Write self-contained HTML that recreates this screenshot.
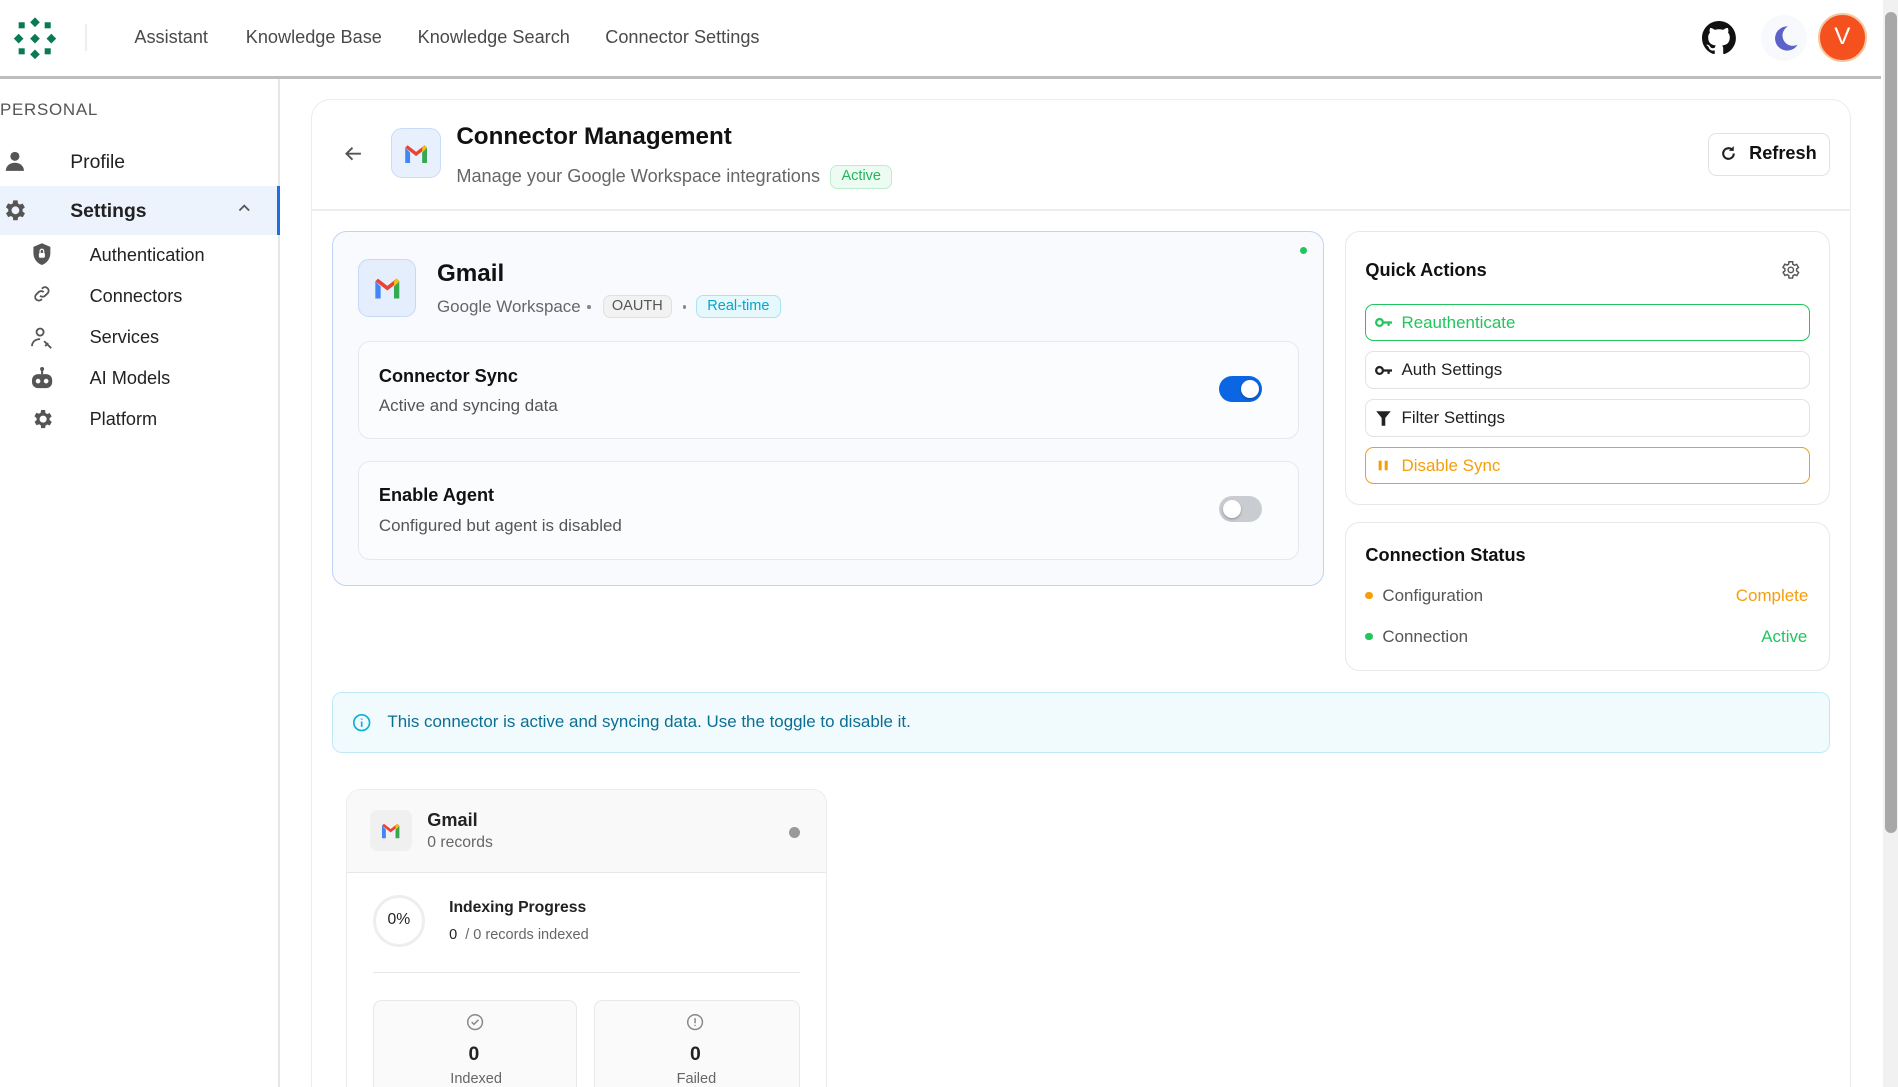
<!DOCTYPE html>
<html><head><meta charset="utf-8"><style>
*{box-sizing:border-box;margin:0;padding:0}
html,body{width:1898px;height:1087px;overflow:hidden;background:#fff}
#r{zoom:1.21046;width:1568px;height:898px;position:relative;font-family:"Liberation Sans",sans-serif;color:#1f2328}
.a{position:absolute;white-space:nowrap}
.box{position:absolute;border:1px solid #e8e8e8;border-radius:12px;background:#fff}
.tg{position:absolute;width:36px;height:21px;border-radius:11px}
.tg i{position:absolute;top:3px;width:15px;height:15px;border-radius:50%;background:#fff;box-shadow:0 1px 2px rgba(0,0,0,.3)}
.btn{position:absolute;left:1128px;width:367px;height:31px;border:1px solid #e2e2e2;border-radius:7px;font-size:14px;font-weight:bold;padding-left:29px;line-height:29px}
.btn svg{position:absolute;left:7px;top:8px}
.sb{font-size:15px;color:#222}
</style></head><body><div id="r">
<svg class="a" style="left:10px;top:12px" width="40" height="40" viewBox="10 12 40 40" fill="#0a7a55">
<rect x="15.5" y="18" width="5" height="5"/><rect x="37" y="18" width="5" height="5"/><rect x="15.5" y="39.5" width="5" height="5"/><rect x="37" y="39.5" width="5" height="5"/>
<path d="M29 14l4 4-4 4-4-4zM15.5 27.5l4 4-4 4-4-4zM29 27.5l4 4-4 4-4-4zM42.5 27.5l4 4-4 4-4-4zM29 40.5l4 4-4 4-4-4z"/></svg>
<div class="a" style="left:70px;top:20px;width:2px;height:22px;background:#eee"></div>
<div class="a" style="left:111px;top:22px;font-size:15px;color:#4a4a4a">Assistant</div>
<div class="a" style="left:203px;top:22px;font-size:15px;color:#4a4a4a">Knowledge Base</div>
<div class="a" style="left:345px;top:22px;font-size:15px;color:#4a4a4a">Knowledge Search</div>
<div class="a" style="left:500px;top:22px;font-size:15px;color:#4a4a4a">Connector Settings</div>
<svg class="a" style="left:1406px;top:17px" width="28" height="28" viewBox="0 0 16 16"><path fill="#111" d="M8 0C3.58 0 0 3.58 0 8c0 3.540 2.29 6.53 5.47 7.59.4.07.55-.17.55-.38v-1.330c-2.23.48-2.7-1.070-2.7-1.070-.36-.92-.89-1.170-.89-1.170-.73-.5.06-.49.06-.49.8.06 1.230.83 1.230.83.71 1.220 1.870.87 2.330.66.07-.52.28-.87.51-1.070-1.780-.2-3.640-.89-3.640-3.950 0-.87.31-1.590.82-2.150-.08-.2-.36-1.020.08-2.120 0 0 .67-.21 2.200.82a7.6 7.6 0 014 0c1.530-1.040 2.200-.82 2.200-.82.44 1.100.16 1.920.08 2.120.51.56.82 1.270.82 2.150 0 3.070-1.870 3.750-3.650 3.950.29.25.54.73.54 1.480v2.200c0 .21.15.46.55.38A8 8 0 0016 8c0-4.420-3.580-8-8-8z"/></svg>
<div class="a" style="left:1455px;top:12px;width:38px;height:38px;border-radius:50%;background:#f8f9fc"></div>
<svg class="a" style="left:1463px;top:20px" width="24" height="24" viewBox="0 0 24 24"><path fill="#5b63c9" d="M14 2a10 10 0 1 0 8 15A8.5 8.5 0 0 1 14 2z"/></svg>
<div class="a" style="left:1502px;top:11px;width:40px;height:40px;border-radius:50%;background:#f4511e;border:2px solid #f5c9a0;color:#fff;font-size:20px;text-align:center;line-height:36px">V</div>
<div class="a" style="left:0;top:63px;width:1554px;height:2px;background:#bdbdbd"></div>
<div class="a" style="left:1556px;top:0;width:12px;height:898px;background:#f1f1f1"></div>
<div class="a" style="left:1557px;top:10px;width:10px;height:678px;background:#a8a8a8;border-radius:5px"></div>
<div class="a" style="left:230px;top:65px;width:1px;height:833px;background:#e6e6e6"></div>
<div class="a" style="left:0;top:83px;font-size:14px;letter-spacing:.6px;color:#555">PERSONAL</div>
<svg class="a" style="left:3px;top:124px" width="18" height="18" viewBox="0 0 24 24" fill="#555"><circle cx="12" cy="7" r="5"/><path d="M2 23c0-6 5-9 10-9s10 3 10 9z"/></svg>
<div class="a sb" style="left:58px;top:125px;font-size:16px">Profile</div>
<div class="a" style="left:0;top:154px;width:231px;height:40px;background:#edf3fd;border-right:3px solid #1f6fe0"></div>
<svg class="a" style="left:1px;top:163px" width="22" height="22" viewBox="0 0 24 24" fill="#555"><path d="M19.4 13a7.5 7.5 0 000-2l2.1-1.6-2-3.5-2.5 1a7 7 0 00-1.7-1L15 3h-4l-.4 2.7a7 7 0 00-1.7 1l-2.5-1-2 3.5L6.6 11a7.5 7.5 0 000 2l-2.1 1.6 2 3.5 2.5-1a7 7 0 001.7 1L11 21h4l.4-2.7a7 7 0 001.7-1l2.5 1 2-3.5zM13 15.5a3.5 3.5 0 110-7 3.5 3.5 0 010 7z"/></svg>
<div class="a sb" style="left:58px;top:165px;font-size:16px;font-weight:bold">Settings</div>
<svg class="a" style="left:196px;top:167px" width="12" height="10" viewBox="0 0 12 10"><path d="M2 7l4-4 4 4" stroke="#555" stroke-width="1.5" fill="none"/></svg>
<svg class="a" style="left:26px;top:200px" width="18" height="20" viewBox="0 0 18 20"><path d="M9 1L2 4v5c0 5 3 8.5 7 10 4-1.5 7-5 7-10V4z" fill="#555"/><rect x="6.5" y="9" width="5" height="4" rx="1" fill="#fff"/><path d="M7.5 9V7.5a1.5 1.5 0 013 0V9" stroke="#fff" fill="none"/></svg>
<div class="a sb" style="left:74px;top:202px">Authentication</div>
<svg class="a" style="left:26px;top:234px" width="18" height="18" viewBox="0 0 24 24" fill="none" stroke="#555" stroke-width="2"><path d="M10 14a4 4 0 005.6 0l3-3a4 4 0 00-5.6-5.6l-1 1M14 10a4 4 0 00-5.6 0l-3 3a4 4 0 005.6 5.6l1-1"/></svg>
<div class="a sb" style="left:74px;top:236px">Connectors</div>
<svg class="a" style="left:25px;top:269px" width="20" height="20" viewBox="0 0 24 24" fill="none" stroke="#555" stroke-width="1.8"><circle cx="10" cy="6" r="3.5"/><path d="M2 20c0-4 3-7 8-7M14 15l7 7M15 20l3-3"/></svg>
<div class="a sb" style="left:74px;top:270px">Services</div>
<svg class="a" style="left:25px;top:302px" width="20" height="20" viewBox="0 0 24 24" fill="#555"><circle cx="12" cy="3" r="2"/><rect x="11" y="4" width="2" height="4"/><rect x="2" y="8" width="20" height="14" rx="6"/><circle cx="8" cy="15" r="2.3" fill="#fff"/><circle cx="16" cy="15" r="2.3" fill="#fff"/></svg>
<div class="a sb" style="left:74px;top:304px">AI Models</div>
<svg class="a" style="left:25px;top:336px" width="20" height="20" viewBox="0 0 24 24" fill="#555"><path d="M19.4 13a7.5 7.5 0 000-2l2.1-1.6-2-3.5-2.5 1a7 7 0 00-1.7-1L15 3h-4l-.4 2.7a7 7 0 00-1.7 1l-2.5-1-2 3.5L6.6 11a7.5 7.5 0 000 2l-2.1 1.6 2 3.5 2.5-1a7 7 0 001.7 1L11 21h4l.4-2.7a7 7 0 001.7-1l2.5 1 2-3.5zM13 15.5a3.5 3.5 0 110-7 3.5 3.5 0 010 7z"/></svg>
<div class="a sb" style="left:74px;top:338px">Platform</div>
<div class="box" style="left:257px;top:82px;width:1272px;height:840px;border-radius:16px;border-color:#ececec"></div>
<div class="a" style="left:258px;top:173px;width:1270px;height:1px;background:#ececec"></div>
<svg class="a" style="left:284px;top:119px" width="16" height="16" viewBox="0 0 16 16"><path d="M14 8H2M7 3L2 8l5 5" stroke="#555" stroke-width="1.6" fill="none"/></svg>
<div class="a" style="left:323px;top:106px;width:41px;height:41px;background:#e8f0fe;border:1px solid #c9dcf8;border-radius:9px"></div>
<svg class="a" style="left:334px;top:119px" width="20" height="16" viewBox="0 0 20 16"><path d="M1 3v13h4V7z" fill="#4285f4"/><path d="M15 7v9h4V3z" fill="#34a853"/><path d="M1 3l9 7 9-7-2-2-7 5.5L3 1z" fill="#ea4335"/><path d="M15 3v4l4-4-2-2z" fill="#fbbc04"/></svg>
<div class="a" style="left:377px;top:102px;font-size:20px;font-weight:bold;color:#111">Connector Management</div>
<div class="a" style="left:377px;top:137px;font-size:15px;color:#666">Manage your Google Workspace integrations</div>
<div class="a" style="left:686px;top:136px;width:51px;height:20px;background:#edfcf2;border:1px solid #bfecce;border-radius:6px;color:#22b55a;font-size:12px;text-align:center;line-height:18px">Active</div>
<div class="a" style="left:1411px;top:110px;width:101px;height:35px;border:1px solid #e2e2e2;border-radius:7px"></div>
<svg class="a" style="left:1421px;top:120px" width="14" height="14" viewBox="0 0 16 16"><path d="M13 8a5 5 0 11-1.5-3.5" stroke="#222" stroke-width="2" fill="none"/><path d="M13 1v4.5H8.5z" fill="#222"/></svg>
<div class="a" style="left:1445px;top:118px;font-size:15px;font-weight:bold;color:#111">Refresh</div>
<div class="box" style="left:274px;top:191px;width:820px;height:293px;background:#f8fafe;border-color:#bcd5f5"></div>
<div class="a" style="left:1074px;top:204px;width:6px;height:6px;border-radius:50%;background:#22c55e"></div>
<div class="a" style="left:296px;top:214px;width:48px;height:48px;background:#e5eefd;border:1px solid #c6d9f7;border-radius:9px"></div>
<svg class="a" style="left:309px;top:229px" width="22" height="18" viewBox="0 0 20 16"><path d="M1 3v13h4V7z" fill="#4285f4"/><path d="M15 7v9h4V3z" fill="#34a853"/><path d="M1 3l9 7 9-7-2-2-7 5.5L3 1z" fill="#ea4335"/><path d="M15 3v4l4-4-2-2z" fill="#fbbc04"/></svg>
<div class="a" style="left:361px;top:215px;font-size:20px;font-weight:bold;color:#111">Gmail</div>
<div class="a" style="left:361px;top:245px;font-size:14px;color:#666">Google Workspace</div>
<div class="a" style="left:485px;top:252px;width:3px;height:3px;border-radius:50%;background:#888"></div>
<div class="a" style="left:498px;top:244px;width:57px;height:19px;background:#f2f2f2;border:1px solid #e0e0e0;border-radius:6px;font-size:12px;color:#555;text-align:center;line-height:17px">OAUTH</div>
<div class="a" style="left:564px;top:252px;width:3px;height:3px;border-radius:50%;background:#888"></div>
<div class="a" style="left:575px;top:244px;width:70px;height:19px;background:#e5f9fd;border:1px solid #a8e5f1;border-radius:6px;font-size:12px;color:#0aa3c8;text-align:center;line-height:17px">Real-time</div>
<div class="box" style="left:296px;top:282px;width:777px;height:81px;background:#fbfcfe;border-color:#e5e9ef;border-radius:10px"></div>
<div class="a" style="left:313px;top:302px;font-size:15px;font-weight:bold;color:#111">Connector Sync</div>
<div class="a" style="left:313px;top:327px;font-size:14px;color:#555">Active and syncing data</div>
<div class="tg" style="left:1007px;top:311px;background:#0b66e4"><i style="left:18px"></i></div>
<div class="box" style="left:296px;top:381px;width:777px;height:82px;background:#fbfcfe;border-color:#e5e9ef;border-radius:10px"></div>
<div class="a" style="left:313px;top:401px;font-size:15px;font-weight:bold;color:#111">Enable Agent</div>
<div class="a" style="left:313px;top:426px;font-size:14px;color:#555">Configured but agent is disabled</div>
<div class="tg" style="left:1007px;top:410px;background:#c9cdd2"><i style="left:3px"></i></div>
<div class="box" style="left:1111px;top:191px;width:401px;height:226px"></div>
<div class="a" style="left:1128px;top:215px;font-size:15px;font-weight:bold;color:#111">Quick Actions</div>
<svg class="a" style="left:1470px;top:214px" width="18" height="18" viewBox="0 0 24 24" fill="none" stroke="#555" stroke-width="1.6"><path d="M19.4 13a7.5 7.5 0 000-2l2.1-1.6-2-3.5-2.5 1a7 7 0 00-1.7-1L15 3h-4l-.4 2.7a7 7 0 00-1.7 1l-2.5-1-2 3.5L6.6 11a7.5 7.5 0 000 2l-2.1 1.6 2 3.5 2.5-1a7 7 0 001.7 1L11 21h4l.4-2.7a7 7 0 001.7-1l2.5 1 2-3.5z"/><circle cx="13" cy="12" r="3"/></svg>
<div class="btn" style="top:251px;border-color:#22c55e;color:#22c55e;font-weight:normal"><svg width="15" height="14" viewBox="0 0 16 14"><circle cx="4" cy="7" r="3" stroke="#22c55e" stroke-width="2" fill="none"/><path d="M7 6h8v2h-2v2h-2V8H7z" fill="#22c55e"/></svg>Reauthenticate</div>
<div class="btn" style="top:290px;color:#222;font-weight:normal"><svg width="15" height="14" viewBox="0 0 16 14"><circle cx="4" cy="7" r="3" stroke="#222" stroke-width="2" fill="none"/><path d="M7 6h8v2h-2v2h-2V8H7z" fill="#222"/></svg>Auth Settings</div>
<div class="btn" style="top:330px;color:#222;font-weight:normal"><svg width="14" height="14" viewBox="0 0 14 14"><path d="M1 1h12L8.5 6.5V13h-3V6.5z" fill="#222"/></svg>Filter Settings</div>
<div class="btn" style="top:369px;border-color:#f59e0b;color:#f59e0b;font-weight:normal"><svg width="14" height="14" viewBox="0 0 14 14"><rect x="3" y="3" width="2.5" height="8" fill="#f59e0b"/><rect x="8" y="3" width="2.5" height="8" fill="#f59e0b"/></svg>Disable Sync</div>
<div class="box" style="left:1111px;top:431px;width:401px;height:123px"></div>
<div class="a" style="left:1128px;top:450px;font-size:15px;font-weight:bold;color:#111">Connection Status</div>
<div class="a" style="left:1128px;top:489px;width:6px;height:6px;border-radius:50%;background:#f59e0b"></div>
<div class="a" style="left:1142px;top:484px;font-size:14px;color:#555">Configuration</div>
<div class="a" style="left:1434px;top:484px;font-size:14px;color:#f59e0b">Complete</div>
<div class="a" style="left:1128px;top:523px;width:6px;height:6px;border-radius:50%;background:#22c55e"></div>
<div class="a" style="left:1142px;top:518px;font-size:14px;color:#555">Connection</div>
<div class="a" style="left:1455px;top:518px;font-size:14px;color:#22c55e">Active</div>
<div class="box" style="left:274px;top:572px;width:1238px;height:50px;background:#f1fbfe;border-color:#bfeaf4;border-radius:8px"></div>
<svg class="a" style="left:291px;top:589px" width="16" height="16" viewBox="0 0 16 16" fill="none" stroke="#0bb1d8" stroke-width="1.4"><circle cx="8" cy="8" r="6.5"/><path d="M8 7v4.5M8 4.5v1"/></svg>
<div class="a" style="left:320px;top:588px;font-size:14px;color:#0b6f92">This connector is active and syncing data. Use the toggle to disable it.</div>
<div class="box" style="left:286px;top:652px;width:397px;height:270px;border-color:#ececec"></div>
<div class="a" style="left:287px;top:653px;width:395px;height:68px;background:#f9f9f9;border-bottom:1px solid #e8e8e8;border-radius:12px 12px 0 0"></div>
<div class="a" style="left:306px;top:669px;width:34px;height:34px;background:#f0f0f0;border-radius:6px"></div>
<svg class="a" style="left:315px;top:679px" width="16" height="14" viewBox="0 0 20 16"><path d="M1 3v13h4V7z" fill="#4285f4"/><path d="M15 7v9h4V3z" fill="#34a853"/><path d="M1 3l9 7 9-7-2-2-7 5.5L3 1z" fill="#ea4335"/><path d="M15 3v4l4-4-2-2z" fill="#fbbc04"/></svg>
<div class="a" style="left:353px;top:669px;font-size:15px;font-weight:bold;color:#222">Gmail</div>
<div class="a" style="left:353px;top:689px;font-size:13px;color:#666">0 records</div>
<div class="a" style="left:652px;top:683px;width:9px;height:9px;border-radius:50%;background:#999"></div>
<div class="a" style="left:308px;top:739px;width:43px;height:43px;border-radius:50%;border:3px solid #eee;text-align:center;line-height:37px;font-size:13px;color:#222">0%</div>
<div class="a" style="left:371px;top:743px;font-size:13px;font-weight:bold;color:#222">Indexing Progress</div>
<div class="a" style="left:371px;top:766px;font-size:12px;color:#666"><b style="color:#222;font-weight:normal">0</b> &nbsp;/ 0 records indexed</div>
<div class="a" style="left:308px;top:803px;width:353px;height:1px;background:#e8e8e8"></div>
<div class="box" style="left:308px;top:826px;width:169px;height:100px;background:#fafafa;border-color:#e8e8e8;border-radius:7px"></div>
<div class="box" style="left:491px;top:826px;width:170px;height:100px;background:#fafafa;border-color:#e8e8e8;border-radius:7px"></div>
<svg class="a" style="left:385px;top:837px" width="15" height="15" viewBox="0 0 16 16" fill="none" stroke="#888" stroke-width="1.3"><circle cx="8" cy="8" r="6.5"/><path d="M5 8l2 2 4-4"/></svg>
<svg class="a" style="left:567px;top:837px" width="15" height="15" viewBox="0 0 16 16" fill="none" stroke="#888" stroke-width="1.3"><circle cx="8" cy="8" r="6.5"/><path d="M8 4.5v4.5M8 10.5v1"/></svg>
<div class="a" style="left:387px;top:862px;font-size:16px;font-weight:bold;color:#222">0</div>
<div class="a" style="left:570px;top:862px;font-size:16px;font-weight:bold;color:#222">0</div>
<div class="a" style="left:372px;top:885px;font-size:12px;color:#666">Indexed</div>
<div class="a" style="left:559px;top:885px;font-size:12px;color:#666">Failed</div>
</div></body></html>
